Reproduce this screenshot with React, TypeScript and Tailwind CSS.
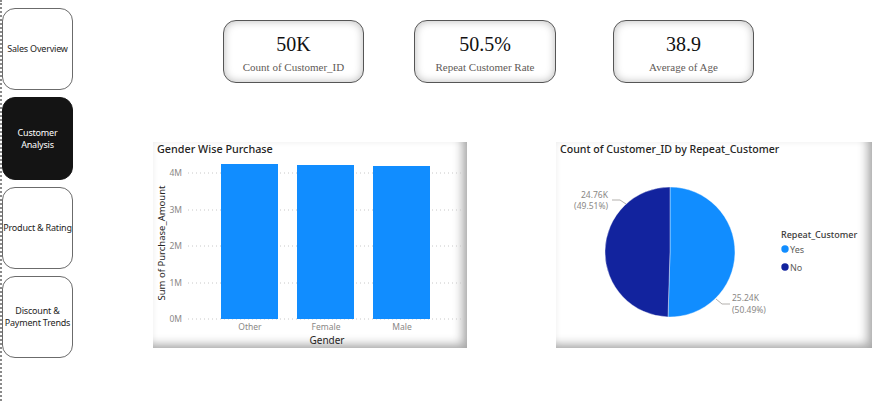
const navItems = [
  { label: "Sales Overview", h: "h-[82px]", active: false },
  { label: "Customer\nAnalysis", h: "h-[83px]", active: true },
  { label: "Product & Rating", h: "h-[82px]", active: false },
  { label: "Discount &\nPayment Trends", h: "h-[82px]", active: false },
];

const kpis = [
  { value: "50K", label: "Count of Customer_ID", cls: "ml-[150px] w-[141px]" },
  { value: "50.5%", label: "Repeat Customer Rate", cls: "ml-[50px] w-[142px]" },
  { value: "38.9", label: "Average of Age", cls: "ml-[57px] w-[141px]" },
];

const bars = [
  { name: "Other", x: 68, top: 22 },
  { name: "Female", x: 144, top: 23 },
  { name: "Male", x: 220, top: 24 },
];

const ticks = [
  { label: "4M", y: 31 },
  { label: "3M", y: 68 },
  { label: "2M", y: 104 },
  { label: "1M", y: 141 },
  { label: "0M", y: 177 },
];

const font = "'Noto Sans', 'Open Sans', sans-serif";

function GenderChart() {
  return (
    <svg width="314" height="206" viewBox="0 0 314 206" style={{ fontFamily: font }}>
      <text x="4" y="10.5" fontSize="10.8" fontWeight="500" fill="#252423">
        Gender Wise Purchase
      </text>
      {ticks.map((t) => (
        <g key={t.label}>
          <line x1="35" x2="309" y1={t.y} y2={t.y} stroke="#c8c8c8" strokeWidth="1" strokeDasharray="1 3" />
          <text x="29" y={t.y + 3} fontSize="8.5" fill="#8a8886" textAnchor="end">
            {t.label}
          </text>
        </g>
      ))}
      {bars.map((b) => (
        <g key={b.name}>
          <rect x={b.x} y={b.top} width="57" height={177 - b.top} fill="#118DFF" />
          <text x={b.x + 29} y="188" fontSize="8.5" fill="#8a8886" textAnchor="middle">
            {b.name}
          </text>
        </g>
      ))}
      <text x="174" y="202" fontSize="10" fill="#252423" textAnchor="middle">
        Gender
      </text>
      <text transform="translate(12 101) rotate(-90)" fontSize="9.5" fill="#252423" textAnchor="middle">
        Sum of Purchase_Amount
      </text>
    </svg>
  );
}

function RepeatPie() {
  return (
    <svg width="316" height="206" viewBox="0 0 316 206" style={{ fontFamily: font }}>
      <text x="4" y="10.5" fontSize="10.6" fontWeight="500" fill="#252423">
        Count of Customer_ID by Repeat_Customer
      </text>
      <path d="M114 45 A65 65 0 1 1 112 174.97 L114 110 Z" fill="#118DFF" stroke="#fff" strokeWidth="0.4" />
      <path d="M112 174.97 A65 65 0 0 1 114 45 L114 110 Z" fill="#12239E" stroke="#fff" strokeWidth="0.4" />

      <polyline points="56,58 64,58 70,62" fill="none" stroke="#b3b0ad" strokeWidth="1" />
      <text x="52" y="56" fontSize="8.5" fill="#8a8886" textAnchor="end">24.76K</text>
      <text x="52" y="67" fontSize="8.5" fill="#8a8886" textAnchor="end">(49.51%)</text>

      <polyline points="160,157 166,162 174,162" fill="none" stroke="#b3b0ad" strokeWidth="1" />
      <text x="176" y="159" fontSize="8.5" fill="#8a8886">25.24K</text>
      <text x="176" y="171" fontSize="8.5" fill="#8a8886">(50.49%)</text>

      <text x="225" y="96" fontSize="9" fontWeight="500" fill="#3b3a39">Repeat_Customer</text>
      <circle cx="229" cy="107" r="3.7" fill="#118DFF" />
      <text x="234" y="110.5" fontSize="9" fill="#605e5c">Yes</text>
      <circle cx="229" cy="125" r="3.7" fill="#12239E" />
      <text x="234" y="128.5" fontSize="9" fill="#605e5c">No</text>
    </svg>
  );
}

export default function App() {
  return (
    <div className="flex w-[883px] h-[401px] bg-white overflow-hidden">
      <div className="border-l-2 border-dotted border-[#8a8a8a] h-full pt-2 flex flex-col gap-[7px]">
        {navItems.map((n) => (
          <div
            key={n.label}
            className={`w-[71px] ${n.h} rounded-[13px] border flex items-center justify-center text-center whitespace-pre text-[9px] leading-[12px] tracking-[-0.2px] font-['Noto_Sans',sans-serif] ${
              n.active ? "bg-[#141414] border-[#141414] text-white" : "bg-white border-[#6b6b6b] text-[#252423]"
            }`}
          >
            {n.label}
          </div>
        ))}
      </div>

      <div className="flex flex-col">
        <div className="flex mt-[20px]">
          {kpis.map((k) => (
            <div
              key={k.label}
              className={`${k.cls} h-[63px] rounded-[13px] border border-[#555] bg-white shadow-[inset_0_0_9px_rgba(0,0,0,0.28)] flex flex-col items-center justify-center font-['Liberation_Serif',serif]`}
            >
              <div className="text-[20px] leading-[24px] text-[#111] mt-[2px]">{k.value}</div>
              <div className="text-[11px] leading-[14px] text-[#5f5b58] mt-[4px]">{k.label}</div>
            </div>
          ))}
        </div>

        <div className="flex mt-[59px]">
          <div className="ml-[80px] w-[314px] h-[206px] bg-white shadow-[inset_0_0_6px_rgba(0,0,0,0.08),inset_-9px_-8px_10px_-4px_rgba(0,0,0,0.3)]">
            <GenderChart />
          </div>
          <div className="ml-[89px] w-[316px] h-[206px] bg-white shadow-[inset_0_0_6px_rgba(0,0,0,0.08),inset_-9px_-8px_10px_-4px_rgba(0,0,0,0.3)]">
            <RepeatPie />
          </div>
        </div>
      </div>
    </div>
  );
}
